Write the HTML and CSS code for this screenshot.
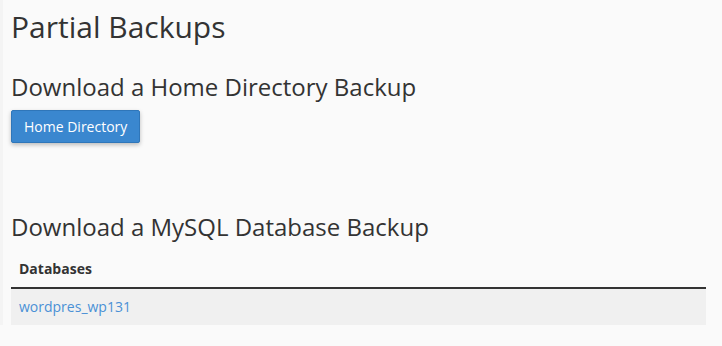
FILE: index.html
```html
<!DOCTYPE html>
<html>
<head>
<meta charset="utf-8">
<link rel="stylesheet" href="styles.css">
</head>
<body>
<div class="page">
  <h1 class="title">Partial Backups</h1>
  <h2 class="section-title">Download a Home Directory Backup</h2>
  <button class="btn-primary" type="button">Home Directory</button>
  <h2 class="section-title section-title--db">Download a MySQL Database Backup</h2>
  <table class="db-table">
    <thead>
      <tr><th>Databases</th></tr>
    </thead>
    <tbody>
      <tr><td><a href="#" class="db-link">wordpres_wp131</a></td></tr>
    </tbody>
  </table>
</div>
</body>
</html>
```
FILE: styles.css
```css
html, body {
  margin: 0;
  padding: 0;
  background: #fafafa;
}
body {
  font-family: "Open Sans", "Liberation Sans", sans-serif;
  color: #333;
  font-size: 14px;
  line-height: 20px;
  border-left: 3px solid #f4f4f4;
}
.page {
  padding: 0 16px 0 8px;
}
.title {
  font-size: 30px;
  font-weight: 400;
  line-height: 33px;
  margin: 10px 0 0 0;
}
.section-title {
  font-size: 24px;
  font-weight: 400;
  line-height: 26px;
  margin: 31px 0 10px 0;
}
.section-title--db {
  margin-top: 71px;
  margin-bottom: 11px;
}
.btn-primary {
  display: block;
  font-family: inherit;
  font-size: 14px;
  line-height: 20px;
  padding: 6px 12px;
  color: #fff;
  background: #3a87cf;
  border: 1px solid #2f76b9;
  border-radius: 2px;
  box-shadow: 0 2px 4px rgba(0, 0, 0, 0.25);
  height: 33px;
  cursor: pointer;
}
.db-table {
  width: 100%;
  border-collapse: collapse;
}
.db-table th {
  text-align: left;
  font-size: 14px;
  font-weight: 700;
  line-height: 20px;
  padding: 8px 8px;
  border-bottom: 2px solid #333;
}
.db-table td {
  background: #f0f0f0;
  padding: 8px 8px;
  line-height: 20px;
}
.db-link {
  color: #4a90d6;
  text-decoration: none;
}
```
